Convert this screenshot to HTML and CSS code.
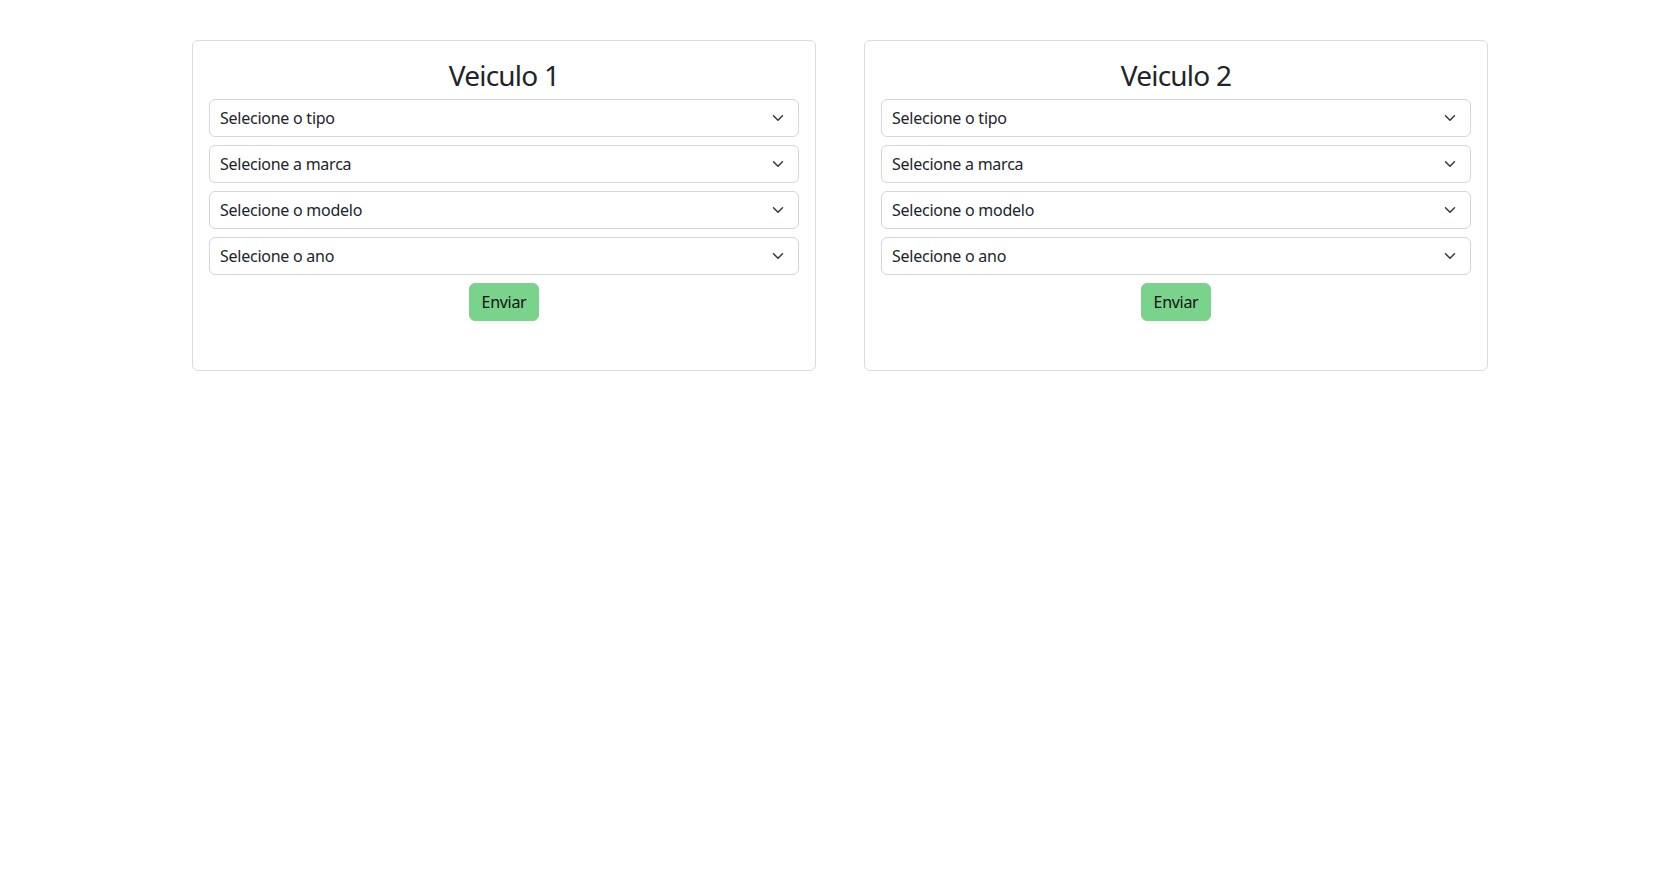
FILE: index.html
```html
<!DOCTYPE html>
<html lang="pt-BR">
<head>
<meta charset="utf-8">
<title>Veiculos</title>
<link rel="stylesheet" href="styles.css">
</head>
<body>
<main class="container">
  <section class="card">
    <h3 class="card-title">Veiculo 1</h3>
    <select class="form-select"><option>Selecione o tipo</option></select>
    <select class="form-select"><option>Selecione a marca</option></select>
    <select class="form-select"><option>Selecione o modelo</option></select>
    <select class="form-select"><option>Selecione o ano</option></select>
    <div class="actions"><button class="btn-send" type="button">Enviar</button></div>
  </section>
  <section class="card">
    <h3 class="card-title">Veiculo 2</h3>
    <select class="form-select"><option>Selecione o tipo</option></select>
    <select class="form-select"><option>Selecione a marca</option></select>
    <select class="form-select"><option>Selecione o modelo</option></select>
    <select class="form-select"><option>Selecione o ano</option></select>
    <div class="actions"><button class="btn-send" type="button">Enviar</button></div>
  </section>
</main>
</body>
</html>
```

FILE: styles.css
```css
* { box-sizing: border-box; }
html, body { margin: 0; padding: 0; background: #fff; }
body {
  font-family: "Noto Sans", "Open Sans", sans-serif;
  font-size: 16px;
  line-height: 1.5;
  color: #212529;
}
.container {
  max-width: 1322px;
  margin: 40px auto 0;
  padding: 0 12px 0 14px;
  display: flex;
  gap: 48px;
}
.card {
  flex: 1 1 0;
  border: 1px solid #dadde0;
  border-radius: 6px;
  padding: 16px 16px 49px;
  display: flex;
  flex-direction: column;
}
.card-title {
  margin: 0 0 6px;
  padding-top: 2px;
  font-size: 28px;
  font-weight: 400;
  line-height: 1.2;
  letter-spacing: -0.8px;
  text-align: center;
}
.form-select {
  display: block;
  width: 100%;
  height: 38px;
  margin: 0 0 8px;
  padding: 6px 36px 6px 10px;
  font-family: inherit;
  font-size: 16px;
  line-height: 1.5;
  letter-spacing: -0.25px;
  color: #212529;
  background-color: #fff;
  background-image: url("data:image/svg+xml,%3csvg xmlns='http://www.w3.org/2000/svg' viewBox='0 0 16 16'%3e%3cpath fill='none' stroke='%23343a40' stroke-linecap='round' stroke-linejoin='round' stroke-width='2' d='m2 5 6 6 6-6'/%3e%3c/svg%3e");
  background-repeat: no-repeat;
  background-position: right 12px center;
  background-size: 16px 12px;
  border: 1px solid #d3d6da;
  border-radius: 6px;
  appearance: none;
  -webkit-appearance: none;
}
.actions {
  display: flex;
  justify-content: center;
}
.btn-send {
  height: 38px;
  padding: 6px 12px;
  font-family: inherit;
  font-size: 16px;
  line-height: 1.5;
  letter-spacing: -0.3px;
  color: #111;
  background: #79d38a;
  border: 1px solid #79d38a;
  border-radius: 6px;
}
```
